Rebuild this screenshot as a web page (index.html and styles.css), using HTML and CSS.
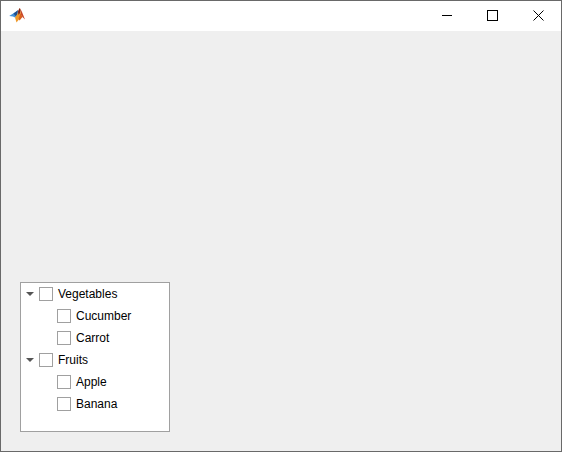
FILE: index.html
```html
<!DOCTYPE html>
<html lang="en">
<head>
  <meta charset="UTF-8" />
  <title>Figure</title>
  <link rel="stylesheet" href="styles.css">
</head>
<body>
  <div class="window">
    <div class="titlebar">
      <svg class="logo" width="17" height="16" viewBox="0 0 17 16">
        <polygon points="0.2,9 5,6 8,4.5 8.5,8 6,10.5 4,9.5" fill="#3f8fd8"/>
        <polygon points="4.5,6.5 9,3 8.5,8 6.5,9" fill="#1f4f8f"/>
        <polygon points="6,10.5 8.5,7 10.5,1 11.5,3 12,9 9.5,13 7.5,15.5" fill="#ef9a2a"/>
        <polygon points="11,1 13,5 16,12.5 13.5,10 12,8 11.5,3" fill="#c8452a"/>
        <polygon points="9,4.5 10.5,1 11.5,3 11,6 9.5,8" fill="#7a2420"/>
        <polygon points="11.5,6 13.5,10 10.5,13.5 9.5,12" fill="#d9601f"/>
      </svg>
      <div class="controls">
        <button class="ctrl">
          <svg width="11" height="11" viewBox="0 0 11 11"><path d="M1 5.5H11" stroke="#000" fill="none"/></svg>
        </button>
        <button class="ctrl">
          <svg width="11" height="11" viewBox="0 0 11 11"><rect x="0.5" y="0.5" width="10" height="10" stroke="#000" fill="none"/></svg>
        </button>
        <button class="ctrl">
          <svg width="11" height="11" viewBox="0 0 11 11"><path d="M0.5 0.5L10.5 10.5M10.5 0.5L0.5 10.5" stroke="#000" fill="none"/></svg>
        </button>
      </div>
    </div>
    <div class="content">
      <div class="tree">
        <div class="row">
          <span class="arrow"></span><span class="check"></span><span>Vegetables</span>
        </div>
        <div class="row child">
          <span class="check"></span><span>Cucumber</span>
        </div>
        <div class="row child">
          <span class="check"></span><span>Carrot</span>
        </div>
        <div class="row">
          <span class="arrow"></span><span class="check"></span><span>Fruits</span>
        </div>
        <div class="row child">
          <span class="check"></span><span>Apple</span>
        </div>
        <div class="row child">
          <span class="check"></span><span>Banana</span>
        </div>
      </div>
    </div>
  </div>
</body>
</html>
```

FILE: styles.css
```css
html, body {
  margin: 0;
  height: 100%;
}
body {
  font-family: "Liberation Sans", Arial, sans-serif;
  font-size: 12px;
  color: #000;
  background: #f0f0f0;
}
.window {
  box-sizing: border-box;
  height: 452px;
  border: 1px solid #696969;
  display: flex;
  flex-direction: column;
}
.titlebar {
  height: 30px;
  background: #fff;
  display: flex;
  align-items: flex-start;
  justify-content: space-between;
  flex-shrink: 0;
}
.logo {
  margin: 6px 0 0 8px;
}
.controls {
  display: flex;
  gap: 1px;
}
.ctrl {
  width: 45px;
  height: 29px;
  padding: 0;
  border: none;
  background: transparent;
  display: flex;
  align-items: center;
  justify-content: center;
}
.content {
  flex: 1;
  background: #efefef;
  display: flex;
  align-items: flex-end;
  padding: 0 0 19px 19px;
}
.tree {
  box-sizing: border-box;
  width: 150px;
  height: 150px;
  background: #fff;
  border: 1px solid #a0a0a0;
}
.row {
  height: 22px;
  display: flex;
  align-items: center;
  padding-left: 5px;
}
.row.child {
  padding-left: 36px;
}
.arrow {
  width: 0;
  height: 0;
  border-left: 4px solid transparent;
  border-right: 4px solid transparent;
  border-top: 4px solid #555;
  margin-right: 5px;
}
.check {
  box-sizing: border-box;
  width: 14px;
  height: 14px;
  background: #fff;
  border: 1px solid #a0a0a0;
  margin-right: 5px;
}
```
